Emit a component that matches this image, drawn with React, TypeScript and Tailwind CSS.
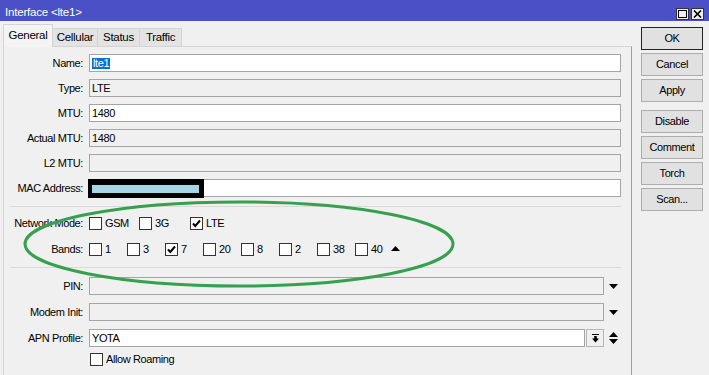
import React from "react";

const Check = ({ checked }: { checked?: boolean }) => (
  <div className="w-[13px] h-[13px] border border-[#333333] bg-white flex items-center justify-center shrink-0">
    {checked && (
      <svg width="11" height="11" viewBox="0 0 11 11">
        <path d="M2 5.5 L4.3 8 L9 2.5" stroke="#000" strokeWidth="2" fill="none" />
      </svg>
    )}
  </div>
);

const Down = () => (
  <svg width="9" height="5" viewBox="0 0 9 5">
    <path d="M0 0 H9 L4.5 5 Z" fill="#000" />
  </svg>
);

const Row = ({ label, children, className = "" }: { label: string; children?: React.ReactNode; className?: string }) => (
  <div className={"flex items-center h-[18px] " + className}>
    <div className="w-[79px] text-right whitespace-nowrap">{label}</div>
    <div className="ml-[6px] flex-1 flex items-center h-full">{children}</div>
  </div>
);

const Input = ({ value, gray, children }: { value?: string; gray?: boolean; children?: React.ReactNode }) => (
  <div
    className={
      "relative flex-1 h-full border border-[#a5a5a5] flex items-center pl-[2px] " +
      (gray ? "bg-[#f0f0f0]" : "bg-white")
    }
  >
    {value}
    {children}
  </div>
);

const Sep = ({ className = "" }: { className?: string }) => (
  <div className={"ml-[6px] h-px bg-[#d9d9d9] " + className} />
);

const Btn = ({ label, focus, className = "" }: { label: string; focus?: boolean; className?: string }) => (
  <div
    className={
      "w-[62px] h-[23px] flex items-center justify-center bg-[#e1e1e1] border " +
      (focus ? "border-[#222222]" : "border-[#adadad]") +
      " " +
      className
    }
  >
    {label}
  </div>
);

export default function App() {
  const bands = [
    { n: "1" },
    { n: "3" },
    { n: "7", c: true },
    { n: "20" },
    { n: "8" },
    { n: "2" },
    { n: "38" },
    { n: "40" },
  ];
  return (
    <div className="relative w-[709px] h-[375px] overflow-hidden bg-[#f0f0f0] text-[11px] tracking-[-0.4px] text-black font-['Liberation_Sans',Arial,sans-serif] flex flex-col">
      {/* title bar */}
      <div className="h-[21px] bg-[#4b50c6] flex items-center pt-[5px] pl-[5px] pr-[5px] shrink-0">
        <div className="text-white text-[11.5px] tracking-[-0.2px] flex-1 leading-none">Interface &lt;lte1&gt;</div>
        <div className="flex gap-[2px] mt-[1px]">
          <div className="w-[13px] h-[12px] bg-[#f0f0f0] border border-[#333] flex items-center justify-center">
            <div className="w-[9px] h-[8px] border border-[#000]" />
          </div>
          <div className="w-[13px] h-[12px] bg-[#f0f0f0] border border-[#333] flex items-center justify-center">
            <svg width="9" height="8" viewBox="0 0 9 8">
              <path d="M1 0.5 L8 7.5 M8 0.5 L1 7.5" stroke="#000" strokeWidth="1.6" />
            </svg>
          </div>
        </div>
      </div>

      <div className="flex flex-1 min-h-0">
        {/* left */}
        <div className="w-[632px] pl-[3px] flex flex-col">
          <div className="h-[25px] flex items-end shrink-0 text-[11.5px] tracking-[-0.3px]">
            <div className="relative z-10 -mb-px w-[50px] h-[23px] bg-[#f4f4f4] border border-b-0 border-[#d4d4d4] flex items-center justify-center">
              General
            </div>
            <div className="w-[45px] h-[18px] bg-[#e3e3e3] border border-l-0 border-b-0 border-[#d4d4d4] flex items-center justify-center">
              Cellular
            </div>
            <div className="w-[42px] h-[18px] bg-[#e3e3e3] border border-l-0 border-b-0 border-[#d4d4d4] flex items-center justify-center">
              Status
            </div>
            <div className="w-[42px] h-[18px] bg-[#e3e3e3] border border-l-0 border-b-0 border-[#d4d4d4] flex items-center justify-center">
              Traffic
            </div>
          </div>
          <div className="flex-1 border-t border-l border-[#d4d4d4] border-r border-r-[#a0a0a0] pt-[7px] pr-[10px] flex flex-col">
            <Row label="Name:">
              <Input>
                <span className="bg-[#0a6fd6] text-white px-[1px] leading-[11px]">lte1</span>
              </Input>
            </Row>
            <Row label="Type:" className="mt-[7px]">
              <Input value="LTE" gray />
            </Row>
            <Row label="MTU:" className="mt-[7px]">
              <Input value="1480" />
            </Row>
            <Row label="Actual MTU:" className="mt-[7px]">
              <Input value="1480" gray />
            </Row>
            <Row label="L2 MTU:" className="mt-[7px]">
              <Input gray />
            </Row>
            <Row label="MAC Address:" className="mt-[7px]">
              <Input>
                <div className="absolute left-[-2px] top-[-1px] w-[116px] h-[19px] bg-black flex items-center pl-[4px]">
                  <div className="w-[107px] h-[8px] bg-[#a6d6e6]" />
                </div>
              </Input>
            </Row>
            <Sep className="mt-[9px]" />
            <Row label="Network Mode:" className="mt-[7px]">
              <div className="w-[50px] flex items-center gap-[3px]">
                <Check /> GSM
              </div>
              <div className="w-[51px] flex items-center gap-[3px]">
                <Check /> 3G
              </div>
              <div className="flex items-center gap-[3px]">
                <Check checked /> LTE
              </div>
            </Row>
            <Row label="Bands:" className="mt-[8px]">
              {bands.map((b) => (
                <div key={b.n} className="w-[38px] flex items-center gap-[3px]">
                  <Check checked={b.c} /> {b.n}
                </div>
              ))}
              <svg width="9" height="5" viewBox="0 0 9 5" className="-ml-[2px] mb-[1px]">
                <path d="M0 5 H9 L4.5 0 Z" fill="#000" />
              </svg>
            </Row>
            <Sep className="mt-[9px]" />
            <Row label="PIN:" className="mt-[9px]">
              <Input gray />
              <div className="w-[17px] flex justify-center pl-[1px]">
                <Down />
              </div>
            </Row>
            <Row label="Modem Init:" className="mt-[8px]">
              <Input gray />
              <div className="w-[17px] flex justify-center pl-[1px]">
                <Down />
              </div>
            </Row>
            <Row label="APN Profile:" className="mt-[8px]">
              <Input value="YOTA" />
              <div className="ml-px w-[18px] h-full border border-[#b5b5b5] bg-[#f0f0f0] flex items-center justify-center">
                <svg width="9" height="9" viewBox="0 0 9 9">
                  <path d="M1 0.5 H8" stroke="#000" strokeWidth="1" />
                  <path d="M3.2 2 H5.8 V4.5 H8 L4.5 8.5 L1 4.5 H3.2 Z" fill="#000" />
                </svg>
              </div>
              <div className="w-[17px] flex justify-center pl-[1px]">
                <svg width="9" height="12" viewBox="0 0 9 12">
                  <path d="M0 5 H9 L4.5 0 Z M0 7 H9 L4.5 12 Z" fill="#000" />
                </svg>
              </div>
            </Row>
            <Row label="" className="mt-[3px]">
              <div className="flex items-center gap-[3px] pl-px">
                <Check /> Allow Roaming
              </div>
            </Row>
          </div>
        </div>

        {/* right buttons */}
        <div className="flex flex-col pl-[9px] pt-[6px] gap-[3px]">
          <Btn label="OK" focus />
          <Btn label="Cancel" />
          <Btn label="Apply" />
          <Btn label="Disable" className="mt-[5px]" />
          <Btn label="Comment" />
          <Btn label="Torch" />
          <Btn label="Scan..." />
        </div>
      </div>

      {/* hand-drawn annotation */}
      <svg className="absolute inset-0 pointer-events-none" width="709" height="375" viewBox="0 0 709 375">
        <ellipse cx="239" cy="244" rx="214" ry="42" fill="none" stroke="#37a04f" strokeWidth="3" />
      </svg>
    </div>
  );
}
